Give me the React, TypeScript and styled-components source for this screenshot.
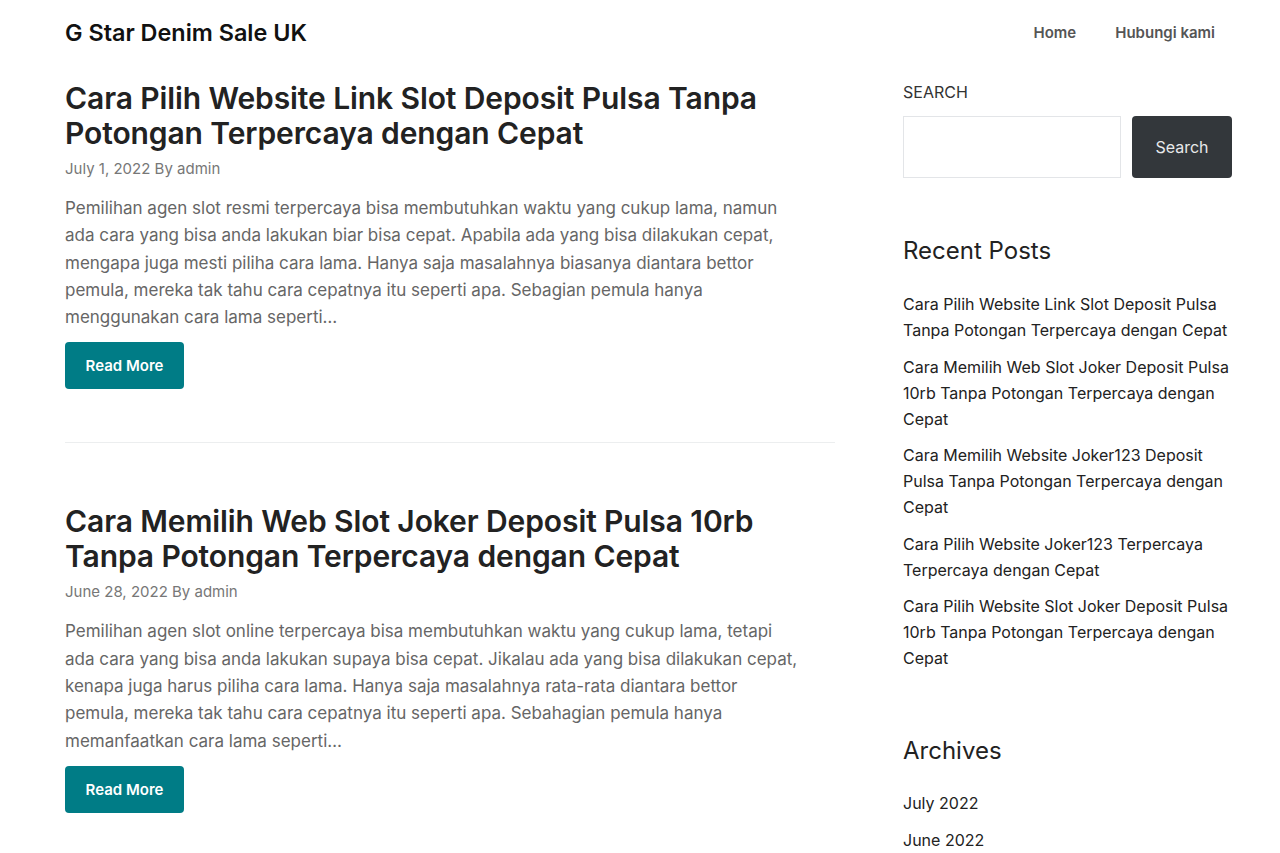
import styled, { createGlobalStyle } from 'styled-components'

const GlobalStyle = createGlobalStyle`
  body {
    margin: 0;
    background: #fff;
    font-family: Inter, "Noto Sans", sans-serif;
    color: #222;
  }
  a { text-decoration: none; color: inherit; }
`

const Page = styled.div`
  padding: 0 48px 0 65px;
`

const Header = styled.header`
  display: flex;
  align-items: center;
  justify-content: space-between;
  height: 64px;
`

const SiteTitle = styled.a`
  font-size: 23.4px;
  font-weight: 600;
  color: #111;
`

const Nav = styled.nav`
  display: flex;
  gap: 39px;
  padding-right: 17px;
`

const NavLink = styled.a`
  font-size: 15px;
  font-weight: 600;
  color: #555;
`

const Layout = styled.div`
  display: grid;
  grid-template-columns: 770px 329px;
  column-gap: 68px;
`

const Main = styled.main`
  display: flex;
  flex-direction: column;
`

const Post = styled.article<{ $first?: boolean }>`
  padding: ${({ $first }) => ($first ? '17px 0 53px' : '61px 0 40px')};
  border-bottom: ${({ $first }) => ($first ? '1px solid #eceeef' : 'none')};
`

const PostTitle = styled.h2`
  margin: 0;
  font-size: 30px;
  line-height: 35px;
  font-weight: 600;
  color: #222;
  letter-spacing: -0.1px;
`

const Meta = styled.div`
  margin-top: 7px;
  font-size: 15px;
  line-height: 22px;
  color: #777;
`

const Excerpt = styled.p`
  margin: 15px 0 0;
  font-size: 17px;
  line-height: 27.3px;
  color: #666;
  max-width: 738px;
`

const ReadMore = styled.a`
  display: inline-flex;
  align-items: center;
  justify-content: center;
  margin-top: 11px;
  width: 119px;
  height: 47px;
  border-radius: 4px;
  background: #007c86;
  color: #fff;
  font-size: 15px;
  font-weight: 600;
`

const Sidebar = styled.aside`
  display: flex;
  flex-direction: column;
  padding-top: 18px;
`

const SearchLabel = styled.div`
  font-size: 16px;
  line-height: 20px;
  color: #333;
  text-transform: uppercase;
`

const SearchRow = styled.div`
  display: flex;
  gap: 11px;
  margin-top: 14px;
`

const SearchInput = styled.input`
  flex: 1;
  height: 62px;
  box-sizing: border-box;
  border: 1px solid #e3e5e8;
  outline: none;
`

const SearchButton = styled.button`
  width: 100px;
  height: 62px;
  border: none;
  border-radius: 4px;
  background: #33373b;
  color: #e8e9ea;
  font-family: inherit;
  font-size: 16px;
`

const WidgetTitle = styled.h3<{ $top: number }>`
  margin: ${({ $top }) => $top}px 0 0;
  font-size: 24px;
  line-height: 30px;
  font-weight: 400;
  color: #222;
`

const LinkList = styled.ul<{ $top: number }>`
  list-style: none;
  margin: ${({ $top }) => $top}px 0 0;
  padding: 0;
  display: flex;
  flex-direction: column;
  gap: 10.5px;
`

const ListLink = styled.a`
  display: block;
  font-size: 16px;
  line-height: 26px;
  color: #222;
`

const posts = [
  {
    title: 'Cara Pilih Website Link Slot Deposit Pulsa Tanpa Potongan Terpercaya dengan Cepat',
    date: 'July 1, 2022',
    excerpt:
      'Pemilihan agen slot resmi terpercaya bisa membutuhkan waktu yang cukup lama, namun ada cara yang bisa anda lakukan biar bisa cepat. Apabila ada yang bisa dilakukan cepat, mengapa juga mesti piliha cara lama. Hanya saja masalahnya biasanya diantara bettor pemula, mereka tak tahu cara cepatnya itu seperti apa. Sebagian pemula hanya menggunakan cara lama seperti…',
  },
  {
    title: 'Cara Memilih Web Slot Joker Deposit Pulsa 10rb Tanpa Potongan Terpercaya dengan Cepat',
    date: 'June 28, 2022',
    excerpt:
      'Pemilihan agen slot online terpercaya bisa membutuhkan waktu yang cukup lama, tetapi ada cara yang bisa anda lakukan supaya bisa cepat. Jikalau ada yang bisa dilakukan cepat, kenapa juga harus piliha cara lama. Hanya saja masalahnya rata-rata diantara bettor pemula, mereka tak tahu cara cepatnya itu seperti apa. Sebahagian pemula hanya memanfaatkan cara lama seperti…',
  },
]

const recent = [
  'Cara Pilih Website Link Slot Deposit Pulsa Tanpa Potongan Terpercaya dengan Cepat',
  'Cara Memilih Web Slot Joker Deposit Pulsa 10rb Tanpa Potongan Terpercaya dengan Cepat',
  'Cara Memilih Website Joker123 Deposit Pulsa Tanpa Potongan Terpercaya dengan Cepat',
  'Cara Pilih Website Joker123 Terpercaya Terpercaya dengan Cepat',
  'Cara Pilih Website Slot Joker Deposit Pulsa 10rb Tanpa Potongan Terpercaya dengan Cepat',
]

const archives = ['July 2022', 'June 2022']

export default function App() {
  return (
    <>
      <GlobalStyle />
      <Page>
        <Header>
          <SiteTitle href="#">G Star Denim Sale UK</SiteTitle>
          <Nav>
            <NavLink href="#">Home</NavLink>
            <NavLink href="#">Hubungi kami</NavLink>
          </Nav>
        </Header>
        <Layout>
          <Main>
            {posts.map((post, i) => (
              <Post key={post.title} $first={i === 0}>
                <PostTitle>{post.title}</PostTitle>
                <Meta>{post.date} By admin</Meta>
                <Excerpt>{post.excerpt}</Excerpt>
                <ReadMore href="#">Read More</ReadMore>
              </Post>
            ))}
          </Main>
          <Sidebar>
            <SearchLabel>Search</SearchLabel>
            <SearchRow>
              <SearchInput type="search" />
              <SearchButton>Search</SearchButton>
            </SearchRow>
            <WidgetTitle $top={58}>Recent Posts</WidgetTitle>
            <LinkList $top={25}>
              {recent.map((r) => (
                <li key={r}>
                  <ListLink href="#">{r}</ListLink>
                </li>
              ))}
            </LinkList>
            <WidgetTitle $top={65}>Archives</WidgetTitle>
            <LinkList $top={24}>
              {archives.map((a) => (
                <li key={a}>
                  <ListLink href="#">{a}</ListLink>
                </li>
              ))}
            </LinkList>
          </Sidebar>
        </Layout>
      </Page>
    </>
  )
}
